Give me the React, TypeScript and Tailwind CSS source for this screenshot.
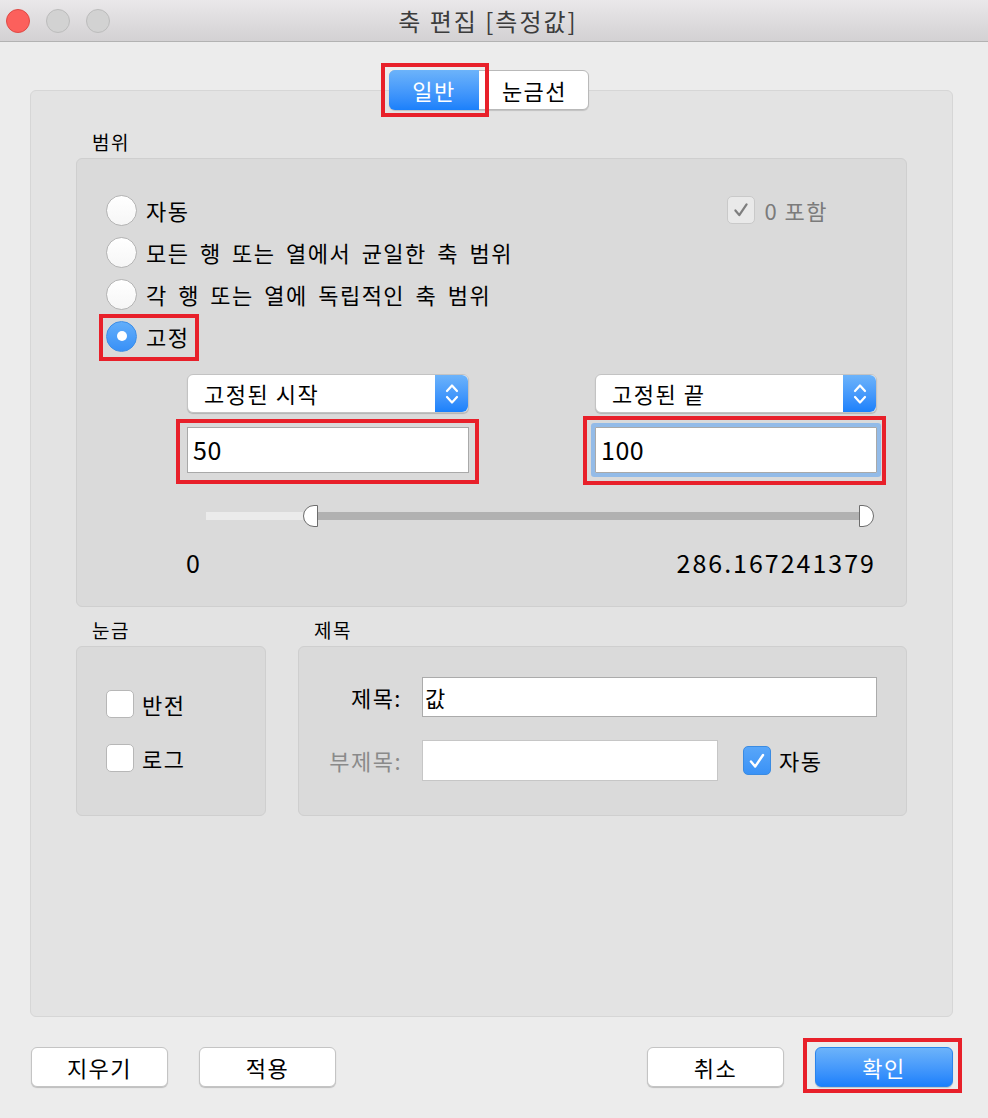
import React from "react";

function Radio({ checked }: { checked?: boolean }) {
  if (checked) {
    return (
      <span className="w-[31px] h-[31px] shrink-0 rounded-full bg-linear-to-b from-[#62aefa] to-[#3890f7] border border-[#3c8ee8] flex items-center justify-center">
        <span className="w-[10px] h-[10px] rounded-full bg-white" />
      </span>
    );
  }
  return (
    <span className="w-[31px] h-[31px] shrink-0 rounded-full bg-linear-to-b from-white to-[#f6f6f6] border border-[#b4b4b4]" />
  );
}

function Check({ className }: { className: string }) {
  return (
    <svg viewBox="0 0 28 28" className={className} fill="none">
      <path d="M7.5 14.5 L12 20 L20.5 7.5" stroke="currentColor" strokeWidth="2.6" strokeLinecap="round" strokeLinejoin="round" />
    </svg>
  );
}

function Checkbox({ state }: { state: "off" | "on" | "disabled" }) {
  if (state === "on") {
    return (
      <span className="w-[28px] h-[29px] shrink-0 rounded-[5px] bg-linear-to-b from-[#58a6f9] to-[#3a92f6] border border-[#3a8be2] flex items-center justify-center text-white">
        <Check className="w-[26px] h-[26px]" />
      </span>
    );
  }
  if (state === "disabled") {
    return (
      <span className="w-[28px] h-[28px] shrink-0 rounded-[5px] bg-[#e9e9e9] border border-[#c9c9c9] flex items-center justify-center text-[#7e7e7e]">
        <Check className="w-[24px] h-[24px]" />
      </span>
    );
  }
  return <span className="w-[28px] h-[28px] shrink-0 rounded-[5px] bg-white border border-[#b7b7b7]" />;
}

function Stepper() {
  return (
    <span className="w-[33px] self-stretch rounded-r-[6px] bg-linear-to-b from-[#6cb3fa] to-[#1a80fb] flex items-center justify-center">
      <svg viewBox="0 0 20 30" className="w-[20px] h-[30px]" fill="none">
        <path d="M5 12 L10 6.5 L15 12" stroke="white" strokeWidth="2.2" strokeLinecap="round" strokeLinejoin="round" />
        <path d="M5 18 L10 23.5 L15 18" stroke="white" strokeWidth="2.2" strokeLinecap="round" strokeLinejoin="round" />
      </svg>
    </span>
  );
}

function Dropdown({ label }: { label: string }) {
  return (
    <div className="h-[39px] flex items-stretch bg-white rounded-[6px] border border-[#c3c3c3] shadow-[0_1px_1px_rgba(0,0,0,0.18)]">
      <span className="flex-1 flex items-center pl-[16px] text-[22px] text-black">{label}</span>
      <Stepper />
    </div>
  );
}

function Btn({ label, primary }: { label: string; primary?: boolean }) {
  return (
    <div
      className={
        primary
          ? "w-[138px] h-[40px] rounded-[6px] flex items-center justify-center text-[22px] text-white bg-linear-to-b from-[#6cb3fa] to-[#1a80fb] border border-[#2a84ec] shadow-[0_1px_1px_rgba(0,0,0,0.18)]"
          : "w-[137px] h-[40px] rounded-[6px] flex items-center justify-center text-[22px] text-black bg-white border border-[#c4c4c4] shadow-[0_1px_1px_rgba(0,0,0,0.2)]"
      }
    >
      {label}
    </div>
  );
}

function RedBox({ className }: { className: string }) {
  return <span className={`absolute border-[4px] border-[#e8202a] pointer-events-none ${className}`} />;
}

export default function App() {
  return (
    <div className="w-[988px] h-[1118px] bg-[#ececec] flex flex-col font-[family-name:'Noto_Sans_CJK_KR','Noto_Sans',sans-serif] tracking-[1.5px] text-black overflow-hidden">
      {/* title bar */}
      <div className="h-[42px] shrink-0 grid grid-cols-[1fr_auto_1fr] items-center bg-linear-to-b from-[#eae8ea] to-[#d3d1d3] border-b border-[#b2b2b2]">
        <div className="flex items-center gap-[16px] pl-[6px]">
          <span className="w-[24px] h-[24px] rounded-full bg-[#fc605c] border border-[#df4a45]" />
          <span className="w-[24px] h-[24px] rounded-full bg-[#d2d2d2] border border-[#bcbcbc]" />
          <span className="w-[24px] h-[24px] rounded-full bg-[#d2d2d2] border border-[#bcbcbc]" />
        </div>
        <div className="text-[24px] leading-none text-[#3c3c3c] tracking-[2px] pr-[12px]">축 편집 [측정값]</div>
        <div />
      </div>

      {/* tab panel */}
      <div className="mt-[48px] ml-[30px] w-[923px] h-[927px] shrink-0 rounded-[6px] bg-[#e3e3e3] border border-[#d6d6d6] flex flex-col px-[45px]">
        {/* segmented tabs */}
        <div className="-mt-[21px] flex pl-[313px]">
          <div className="flex h-[40px] rounded-[6px] border border-[#b9b9b9] bg-white shadow-[0_1px_1px_rgba(0,0,0,0.15)]">
            <div className="relative w-[90px] -my-px -ml-px rounded-l-[6px] bg-linear-to-b from-[#6cb3fa] to-[#1a80fb] flex items-center justify-center text-[22px] text-white">
              일반
              <RedBox className="-left-[8px] -right-[10px] -top-[7px] -bottom-[7px]" />
            </div>
            <div className="w-[109px] flex items-center justify-center text-[22px] pl-[2px]">눈금선</div>
          </div>
        </div>

        {/* 범위 */}
        <div className="mt-[20px] h-[24px] pl-[16px] text-[19px] leading-[24px]">범위</div>
        <div className="mt-[4px] h-[449px] rounded-[6px] bg-[#dadada] border border-[#cfcfcf] flex flex-col">
          <div className="flex pt-[30px] pl-[29px] pr-[78px]">
            <div className="flex-1 flex flex-col">
              <div className="h-[42px] flex items-center gap-[9px] text-[22px]">
                <Radio />
                <span>자동</span>
              </div>
              <div className="h-[42px] flex items-center gap-[9px] text-[22px] [word-spacing:4px]">
                <Radio />
                <span>모든 행 또는 열에서 균일한 축 범위</span>
              </div>
              <div className="h-[42px] flex items-center gap-[9px] text-[22px] [word-spacing:4px]">
                <Radio />
                <span>각 행 또는 열에 독립적인 축 범위</span>
              </div>
              <div className="h-[42px] flex items-center">
                <div className="relative flex items-center gap-[9px] text-[22px]">
                  <Radio checked />
                  <span>고정</span>
                  <RedBox className="-left-[7px] -right-[10px] -top-[6px] -bottom-[8px]" />
                </div>
              </div>
            </div>
            <div className="h-[42px] flex items-center gap-[9px] text-[22px] text-[#7b7b7b]">
              <Checkbox state="disabled" />
              <span>0 포함</span>
            </div>
          </div>

          <div className="mt-[17px] pl-[110px] pr-[29px] grid grid-cols-[282px_282px] justify-between">
            <div className="flex flex-col gap-[14px]">
              <Dropdown label="고정된 시작" />
              <div className="relative h-[46px] bg-white border border-[#a9a9a9] flex items-center pl-[5px] text-[25px] tracking-[0.5px]">
                50
                <RedBox className="-left-[12px] -right-[11px] -top-[9px] -bottom-[12px]" />
              </div>
            </div>
            <div className="flex flex-col gap-[14px]">
              <Dropdown label="고정된 끝" />
              <div className="relative h-[46px] bg-white border border-[#a9a9a9] rounded-[1px] shadow-[0_0_0_4px_#93bbe8] flex items-center pl-[5px] text-[25px] tracking-[0.5px]">
                100
                <RedBox className="-left-[13px] -right-[10px] -top-[12px] -bottom-[13px]" />
              </div>
            </div>
          </div>

          {/* slider */}
          <div className="mt-[32px] ml-[129px] mr-[32px] h-[22px] flex items-center">
            <span className="w-[97px] h-[8px] bg-[#ebebeb]" />
            <span className="w-[15px] h-[22px] rounded-l-full bg-white border border-[#6d6d6d]" />
            <span className="flex-1 h-[8px] bg-[#b1b1b1]" />
            <span className="w-[15px] h-[22px] rounded-r-full bg-white border border-[#6d6d6d]" />
          </div>
          <div className="mt-[20px] pl-[109px] pr-[30px] flex justify-between text-[25px] leading-[30px]">
            <span>0</span>
            <span className="tracking-[2px]">286.167241379</span>
          </div>
        </div>

        {/* 눈금 / 제목 */}
        <div className="mt-[11px] flex gap-[32px]">
          <div className="w-[190px] flex flex-col">
            <div className="h-[24px] pl-[16px] text-[19px] leading-[24px]">눈금</div>
            <div className="mt-[4px] h-[170px] rounded-[6px] bg-[#dadada] border border-[#cfcfcf] flex flex-col pt-[43px] pl-[29px] gap-[26px]">
              <div className="flex items-center gap-[8px] text-[22px] h-[28px]">
                <Checkbox state="off" />
                <span>반전</span>
              </div>
              <div className="flex items-center gap-[8px] text-[22px] h-[28px]">
                <Checkbox state="off" />
                <span>로그</span>
              </div>
            </div>
          </div>
          <div className="flex-1 flex flex-col">
            <div className="h-[24px] pl-[16px] text-[19px] leading-[24px]">제목</div>
            <div className="mt-[4px] h-[170px] rounded-[6px] bg-[#dadada] border border-[#cfcfcf] flex flex-col pt-[30px] pr-[29px] gap-[23px]">
              <div className="flex items-center h-[40px]">
                <span className="w-[103px] text-right text-[22px]">제목:</span>
                <div className="ml-[20px] flex-1 h-[40px] bg-white border border-[#ababab] flex items-center pl-[2px] text-[22px]">값</div>
              </div>
              <div className="flex items-center h-[41px]">
                <span className="w-[103px] text-right text-[22px] text-[#8a8a8a]">부제목:</span>
                <div className="ml-[20px] w-[296px] h-[41px] bg-white border border-[#c6c6c6]" />
                <div className="ml-[25px] flex items-center gap-[8px] text-[22px]">
                  <Checkbox state="on" />
                  <span>자동</span>
                </div>
              </div>
            </div>
          </div>
        </div>
      </div>

      {/* bottom buttons */}
      <div className="mt-[30px] ml-[30px] w-[923px] flex justify-between">
        <div className="flex gap-[31px] pl-[1px]">
          <Btn label="지우기" />
          <Btn label="적용" />
        </div>
        <div className="flex gap-[31px]">
          <Btn label="취소" />
          <div className="relative">
            <Btn label="확인" primary />
            <RedBox className="-left-[12px] -right-[9px] -top-[9px] -bottom-[6px]" />
          </div>
        </div>
      </div>
    </div>
  );
}
